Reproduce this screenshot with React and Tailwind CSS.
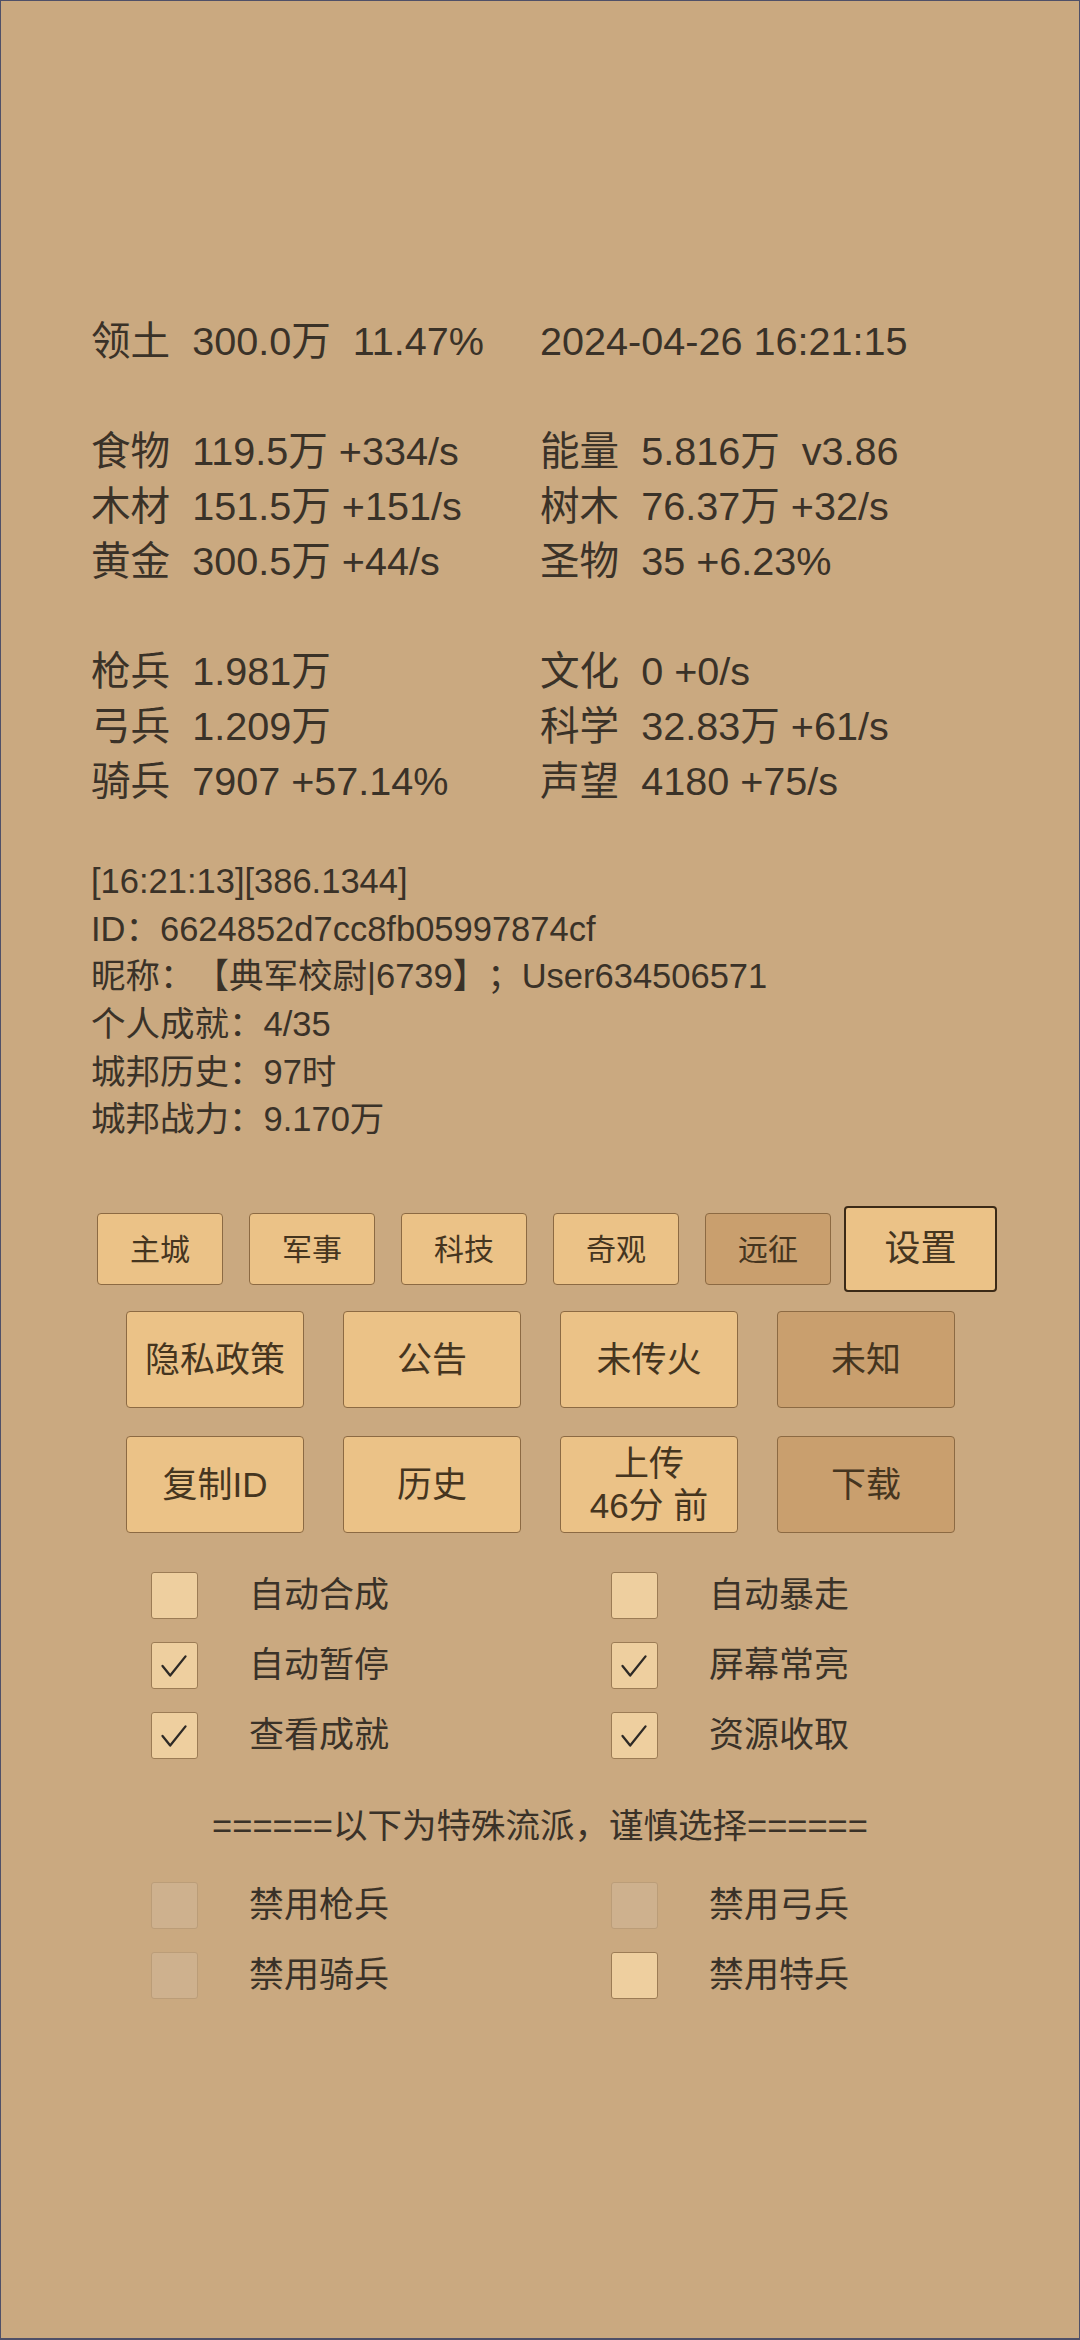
import React from 'react';

const stats = [
  ['领土  300.0万  11.47%', '2024-04-26 16:21:15'],
  ['', ''],
  ['食物  119.5万 +334/s', '能量  5.816万  v3.86'],
  ['木材  151.5万 +151/s', '树木  76.37万 +32/s'],
  ['黄金  300.5万 +44/s', '圣物  35 +6.23%'],
  ['', ''],
  ['枪兵  1.981万', '文化  0 +0/s'],
  ['弓兵  1.209万', '科学  32.83万 +61/s'],
  ['骑兵  7907 +57.14%', '声望  4180 +75/s'],
];

const info = [
  '[16:21:13][386.1344]',
  'ID：6624852d7cc8fb05997874cf',
  '昵称：【典军校尉|6739】；User634506571',
  '个人成就：4/35',
  '城邦历史：97时',
  '城邦战力：9.170万',
];

const tabs = [
  { label: '主城' },
  { label: '军事' },
  { label: '科技' },
  { label: '奇观' },
  { label: '远征', dark: true },
];

const row2 = [
  { label: '隐私政策' },
  { label: '公告' },
  { label: '未传火' },
  { label: '未知', dark: true },
];

const row3 = [
  { label: '复制ID' },
  { label: '历史' },
  { label: '上传\n46分 前' },
  { label: '下载', dark: true },
];

const checks = [
  [{ label: '自动合成', checked: false }, { label: '自动暴走', checked: false }],
  [{ label: '自动暂停', checked: true }, { label: '屏幕常亮', checked: true }],
  [{ label: '查看成就', checked: true }, { label: '资源收取', checked: true }],
];

const special = [
  [{ label: '禁用枪兵', disabled: true }, { label: '禁用弓兵', disabled: true }],
  [{ label: '禁用骑兵', disabled: true }, { label: '禁用特兵' }],
];

function BigButton({ label, dark }) {
  return (
    <div
      className={`w-[178px] h-[97px] rounded-[4px] border-[1.5px] border-[#8c6a43] flex items-center justify-center text-center whitespace-pre leading-[42px] text-[35px] text-[#45351f] ${
        dark ? 'bg-[#c99f6e]' : 'bg-[#ebc287]'
      }`}
    >
      {label}
    </div>
  );
}

function CheckItem({ label, checked, disabled }) {
  return (
    <div className="flex items-center h-[70px]">
      <div
        className={`w-[47px] h-[47px] rounded-[3px] border-[1.5px] flex items-center justify-center ${
          disabled ? 'bg-[#ceb18e] border-[#bb9d78]' : 'bg-[#eecf9f] border-[#9c7c55]'
        }`}
      >
        {checked && (
          <svg width="47" height="47" viewBox="0 0 47 47" fill="none">
            <polyline points="11,24 19,34 35,14" stroke="#2e2a26" strokeWidth="2.4" strokeLinecap="round" strokeLinejoin="round" />
          </svg>
        )}
      </div>
      <span className="ml-[51px] text-[35px] text-[#3a3228]">{label}</span>
    </div>
  );
}

export default function App() {
  return (
    <div
      className="w-[1080px] h-[2340px] box-border bg-[#caa980] border border-b-2 border-[#4f5068] text-[#3a3228] overflow-hidden [text-spacing-trim:space-all]"
      style={{ fontFamily: '"Liberation Sans", "Noto Sans CJK SC", sans-serif' }}
    >
      {/* resource stats */}
      <div className="pt-[313px] pl-[90px]">
        {stats.map((r, i) => (
          <div key={i} className="grid grid-cols-[449px_1fr] h-[55px] leading-[55px] text-[39.6px] whitespace-pre">
            <span>{r[0]}</span>
            <span>{r[1]}</span>
          </div>
        ))}
      </div>

      {/* player info */}
      <div className="mt-[49px] pl-[90px]">
        {info.map((line, i) => (
          <div key={i} className="h-[47.7px] leading-[47.7px] text-[34.5px] whitespace-pre">
            {line}
          </div>
        ))}
      </div>

      {/* tab buttons */}
      <div className="mt-[62px] pl-[96px] flex items-center h-[86px]">
        <div className="flex gap-[26px]">
          {tabs.map((t) => (
            <div
              key={t.label}
              className={`w-[126px] h-[72px] rounded-[4px] border-[1.5px] border-[#8c6a43] flex items-center justify-center text-[30px] text-[#45351f] ${
                t.dark ? 'bg-[#c99f6e]' : 'bg-[#ebc287]'
              }`}
            >
              {t.label}
            </div>
          ))}
        </div>
        <div className="ml-[13px] w-[153px] h-[86px] rounded-[4px] border-2 border-[#3b2a17] bg-[#ebc287] flex items-center justify-center text-[36px] text-[#45351f]">
          设置
        </div>
      </div>

      <div className="mt-[19px] pl-[125px] flex gap-[39px]">
        {row2.map((b) => (
          <BigButton key={b.label} {...b} />
        ))}
      </div>
      <div className="mt-[28px] pl-[125px] flex gap-[39px]">
        {row3.map((b) => (
          <BigButton key={b.label} {...b} />
        ))}
      </div>

      {/* options */}
      <div className="mt-[27px] pl-[150px]">
        {checks.map((row, i) => (
          <div key={i} className="grid grid-cols-[460px_460px]">
            {row.map((c) => (
              <CheckItem key={c.label} {...c} />
            ))}
          </div>
        ))}
      </div>

      <div className="mt-[21px] h-[70px] leading-[70px] text-center text-[34.5px] text-[#3a3228]">
        ======以下为特殊流派，谨慎选择======
      </div>

      <div className="mt-[9px] pl-[150px]">
        {special.map((row, i) => (
          <div key={i} className="grid grid-cols-[460px_460px]">
            {row.map((c) => (
              <CheckItem key={c.label} {...c} />
            ))}
          </div>
        ))}
      </div>
    </div>
  );
}
